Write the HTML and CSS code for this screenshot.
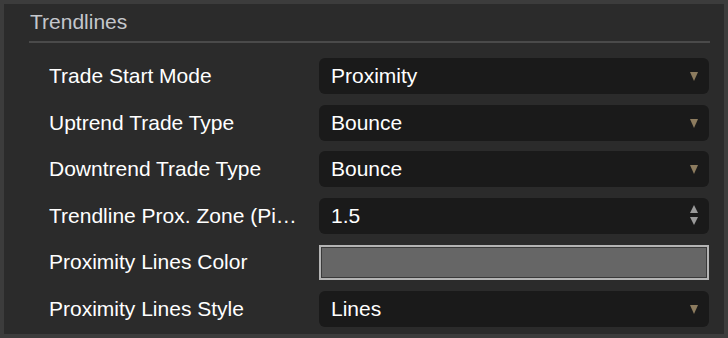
FILE: index.html
```html
<!DOCTYPE html>
<html lang="en">
<head>
<meta charset="UTF-8">
<meta name="viewport" content="width=device-width, initial-scale=1.0">
<title>Trendlines</title>
<link rel="stylesheet" href="styles.css">
</head>
<body>

<div class="panel">
  <div class="panel-title">Trendlines</div>

  <div class="rows">
    <div class="row">
      <div class="label">Trade Start Mode</div>
      <div class="field select">Proximity<span class="arrow"></span></div>
    </div>
    <div class="row">
      <div class="label">Uptrend Trade Type</div>
      <div class="field select">Bounce<span class="arrow"></span></div>
    </div>
    <div class="row">
      <div class="label">Downtrend Trade Type</div>
      <div class="field select">Bounce<span class="arrow"></span></div>
    </div>
    <div class="row">
      <div class="label">Trendline Prox. Zone (Pips)</div>
      <div class="field number">1.5
        <span class="spin"><span class="up"></span><span class="down"></span></span>
      </div>
    </div>
    <div class="row">
      <div class="label">Proximity Lines Color</div>
      <div class="color-box"><div class="swatch" style="background: #666666;"></div></div>
    </div>
    <div class="row">
      <div class="label">Proximity Lines Style</div>
      <div class="field select">Lines<span class="arrow"></span></div>
    </div>
  </div>
</div>

</body>
</html>
```

FILE: styles.css
```css
body {
  margin: 0;
  background: #3c3c3c;
  font-family: "Liberation Sans", Arial, sans-serif;
}
.panel {
  margin: 4px;
  width: 720px;
  height: 330px;
  box-sizing: border-box;
  background: #2b2b2b;
  padding: 6px 14px 0 25px;
}
.panel-title {
  color: #c4c7cc;
  font-size: 21px;
  line-height: 24px;
  padding-left: 1px;
  padding-bottom: 7px;
  border-bottom: 2px solid #4a4a4a;
}
.rows {
  display: flex;
  flex-direction: column;
  gap: 10.6px;
  padding: 15px 1px 0 20px;
}
.row {
  display: grid;
  grid-template-columns: 270px 1fr;
  align-items: center;
  height: 36px;
}
.label {
  color: #ffffff;
  font-size: 21px;
  white-space: nowrap;
  overflow: hidden;
  text-overflow: ellipsis;
  padding-right: 18px;
}
.field {
  position: relative;
  height: 36px;
  line-height: 36px;
  background: #1a1a1a;
  border-radius: 6px;
  color: #ffffff;
  font-size: 21px;
  padding-left: 12px;
}
.arrow {
  position: absolute;
  right: 11px;
  top: 14px;
  width: 0;
  height: 0;
  border-left: 4.5px solid transparent;
  border-right: 4.5px solid transparent;
  border-top: 9px solid #8d7c5f;
}
.spin {
  position: absolute;
  right: 11px;
  top: 7px;
  display: flex;
  flex-direction: column;
  gap: 4px;
}
.spin .up {
  border-left: 4.5px solid transparent;
  border-right: 4.5px solid transparent;
  border-bottom: 8px solid #9a9a9a;
}
.spin .down {
  border-left: 4.5px solid transparent;
  border-right: 4.5px solid transparent;
  border-top: 8px solid #9a9a9a;
}
.color-box {
  height: 35px;
  box-sizing: border-box;
  border: 2px solid #b4b4b4;
}
.swatch {
  height: 100%;
  box-sizing: border-box;
  border: 1px solid #3a3a3a;
}
```
